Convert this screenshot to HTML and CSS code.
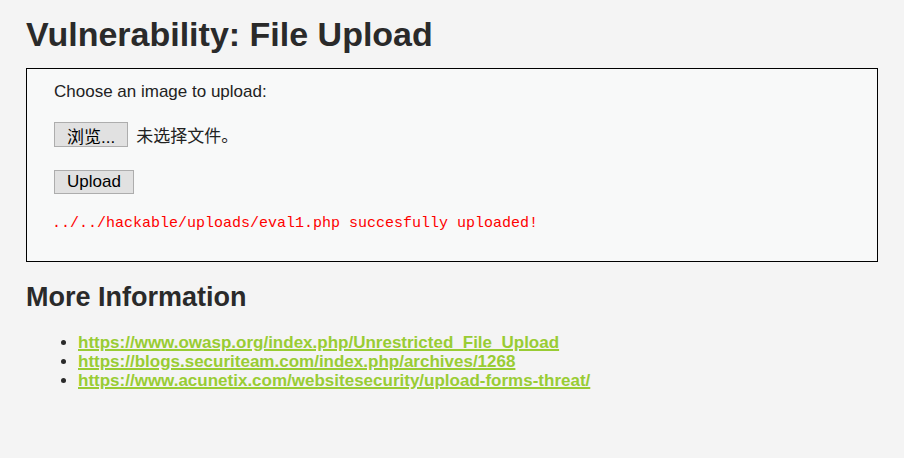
FILE: index.html
```html
<!DOCTYPE html>
<html lang="en">
<head>
    <meta charset="UTF-8">
    <title>Vulnerability: File Upload</title>
    <link rel="stylesheet" href="styles.css">
</head>
<body>

    <div class="body-padded">
        <h1>Vulnerability: File Upload</h1>

        <div class="vulnerable-code-area">
            <form>
                <p class="label">Choose an image to upload:</p>
                <div class="file-row">
                    <button type="button" class="btn">浏览...</button>
                    <span class="file-name">未选择文件。</span>
                </div>
                <button type="button" class="btn upload-btn">Upload</button>
            </form>
            <pre class="result">../../hackable/uploads/eval1.php succesfully uploaded!</pre>
        </div>

        <h2>More Information</h2>
        <ul class="info-links">
            <li><a href="#">https://www.owasp.org/index.php/Unrestricted_File_Upload</a></li>
            <li><a href="#">https://blogs.securiteam.com/index.php/archives/1268</a></li>
            <li><a href="#">https://www.acunetix.com/websitesecurity/upload-forms-threat/</a></li>
        </ul>
    </div>

</body>
</html>
```

FILE: styles.css
```css
body {
    margin: 0;
    background-color: #f4f4f4;
    font-family: "Liberation Sans", Arial, "Noto Sans CJK SC", sans-serif;
    color: #2a2a2a;
}
.body-padded {
    padding: 14px 26px 20px 26px;
}
h1 {
    font-size: 34px;
    font-weight: bold;
    margin: 0 0 14px 0;
    line-height: 40px;
}
.vulnerable-code-area {
    width: 852px;
    border: 1px solid #000;
    background-color: #f8f9f9;
    padding: 12px 27px 28px 25px;
    box-sizing: border-box;
    height: 194px;
}
.label {
    margin: 0 0 0 2px;
    font-size: 17px;
    line-height: 21px;
    color: #222;
}
.file-row {
    margin: 20px 0 0 2px;
    display: flex;
    align-items: center;
    gap: 8px;
}
.btn {
    font-family: "Liberation Sans", Arial, "Noto Sans CJK SC", sans-serif;
    font-size: 17px;
    background-color: #e1e1e1;
    border: 1px solid #adadad;
    color: #000;
    padding: 0 12px;
    height: 25px;
    border-radius: 0;
}
.upload-btn {
    margin: 23px 0 0 2px;
    height: 24px;
    padding: 0 12px;
}
.file-name {
    font-size: 17px;
    color: #222;
}
.result {
    margin: 21px 0 0 0;
    font-family: "Liberation Mono", "Courier New", monospace;
    font-size: 15px;
    color: #ff0000;
}
h2 {
    font-size: 27px;
    font-weight: bold;
    margin: 20px 0 21px 0;
    line-height: 30px;
}
.info-links {
    margin: 0;
    padding-left: 52px;
    font-size: 17px;
    line-height: 19px;
}
.info-links a {
    color: #99cc33;
    font-weight: bold;
    text-decoration-thickness: 2px;
}
```
